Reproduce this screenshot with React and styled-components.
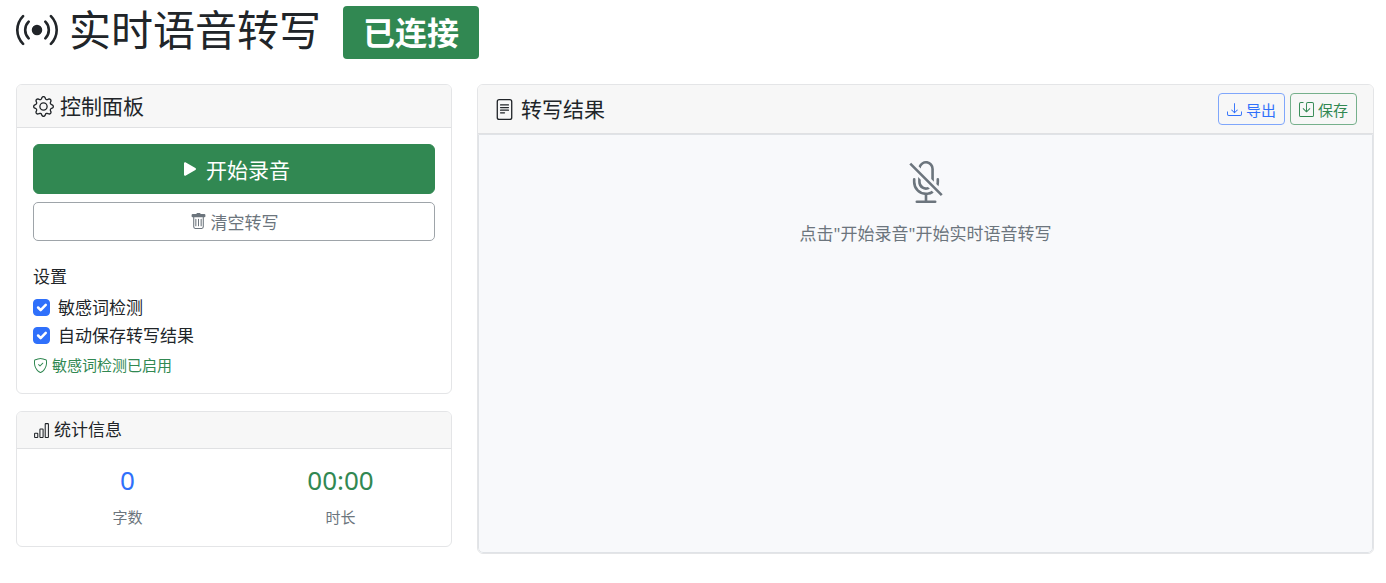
import React, { useState } from 'react'
import styled, { createGlobalStyle } from 'styled-components'
import {
  BsBarChart,
  BsBroadcast,
  BsDownload,
  BsFileText,
  BsGear,
  BsMicMute,
  BsPlayFill,
  BsSave,
  BsShieldCheck
} from 'react-icons/bs'

const GlobalStyle = createGlobalStyle`
  * {
    box-sizing: border-box;
  }
  body {
    margin: 0;
    background: #fff;
    color: #212529;
    font-family: 'Noto Sans', 'Noto Sans CJK SC', sans-serif;
    font-size: 17px;
    line-height: 25px;
  }
  h1, h2, h3, p {
    margin: 0;
    font-weight: 400;
  }
  button, input {
    font-family: inherit;
  }
`

const Page = styled.div`
  padding-left: 3px;
`

const PageHeader = styled.header`
  display: flex;
  align-items: flex-start;
  padding: 6px 12px 25px 13px;
`

const PageTitle = styled.h1`
  display: flex;
  align-items: center;
  gap: 11px;
  font-size: 42px;
  line-height: 47px;
`

const Badge = styled.span`
  margin-left: 22px;
  padding: 5px 20px;
  border-radius: 4px;
  background: #318852;
  color: #fff;
  font-size: 32px;
  font-weight: 700;
  line-height: 43px;
`

const Row = styled.main`
  display: grid;
  grid-template-columns: 1fr 2fr;
`

const Column = styled.div`
  display: flex;
  flex-direction: column;
  gap: 17px;
  padding: 0 12px 0 13px;
`

const Card = styled.section`
  display: flex;
  flex-direction: column;
  flex-grow: ${props => (props.$grow ? 1 : 0)};
  border: 1px solid #e4e5e7;
  border-radius: 6px;
  overflow: hidden;
`

const CardHeader = styled.div`
  display: flex;
  align-items: center;
  justify-content: space-between;
  padding: 8px 16px;
  border-bottom: 1px solid #e0e1e3;
  background: #f7f7f7;
`

const CardTitle = styled.h2`
  display: flex;
  align-items: center;
  gap: ${props => (props.$small ? '4px' : '6px')};
  font-size: ${props => (props.$small ? '17px' : '21px')};
  line-height: ${props => (props.$small ? '20px' : '26px')};
`

const CardBody = styled.div`
  padding: 16px 16px 17px;
`

const ButtonStack = styled.div`
  display: grid;
  gap: 8px;
  margin-bottom: 26px;
`

const Button = styled.button`
  display: flex;
  align-items: center;
  justify-content: center;
  gap: 4px;
  cursor: pointer;
`

const RecordButton = styled(Button)`
  height: 50px;
  border: 1px solid #318852;
  border-radius: 6px;
  background: #318852;
  color: #fff;
  font-size: 21px;
`

const ClearButton = styled(Button)`
  height: 39px;
  border: 1px solid #9ea4a9;
  border-radius: 5px;
  background: #fff;
  color: #6c757d;
  font-size: 17px;
`

const Tools = styled.div`
  display: flex;
  gap: 5px;
`

const ToolButton = styled(Button)`
  height: 32px;
  padding: 0 8px;
  border: 1px solid ${props => props.$border};
  border-radius: 4px;
  background: transparent;
  color: ${props => props.$color};
  font-size: 15px;
`

const SettingsTitle = styled.h3`
  margin-bottom: 8px;
  font-size: 17px;
  line-height: 20px;
`

const Check = styled.label`
  display: flex;
  align-items: center;
  gap: 8px;
  margin-bottom: 3px;
`

const CheckBoxWrap = styled.span`
  display: grid;
  place-items: center;

  > * {
    grid-area: 1 / 1;
  }
`

const Checkbox = styled.input`
  appearance: none;
  width: 17px;
  height: 17px;
  margin: 0;
  border: 1px solid ${props => (props.checked ? '#2f70fb' : '#dee2e6')};
  border-radius: 4px;
  background: ${props => (props.checked ? '#2f70fb' : '#fff')};
`

const CheckMark = styled.svg`
  pointer-events: none;
`

const Status = styled.p`
  display: flex;
  align-items: center;
  gap: 4px;
  margin-top: 6px;
  color: #318852;
  font-size: 15px;
  line-height: 22px;
`

const Stats = styled.div`
  display: grid;
  grid-template-columns: 1fr 1fr;
  padding: 15px 4px 17px;
  text-align: center;
`

const StatValue = styled.div`
  margin-bottom: 9px;
  color: ${props => props.$color};
  font-size: 26px;
  line-height: 32px;
`

const StatLabel = styled.div`
  color: #6c757d;
  font-size: 15px;
  line-height: 24px;
`

const Transcript = styled.div`
  display: flex;
  flex-direction: column;
  align-items: center;
  flex-grow: 1;
  gap: 18px;
  min-height: 419px;
  padding: 26px 17px;
  border: 1px solid #e0e3e7;
  border-radius: 0 0 5px 5px;
  background: #f8f9fb;
  color: #6c757d;
`

// trash can with a solid lid
const TrashIcon = () => (
  <svg width="1em" height="1em" viewBox="0 0 16 16" fill="currentColor">
    <path d="M5.5 5.5A.5.5 0 0 1 6 6v6a.5.5 0 0 1-1 0V6a.5.5 0 0 1 .5-.5zm2.5 0a.5.5 0 0 1 .5.5v6a.5.5 0 0 1-1 0V6a.5.5 0 0 1 .5-.5zm3 .5a.5.5 0 0 0-1 0v6a.5.5 0 0 0 1 0V6z" />
    <path
      fillRule="evenodd"
      d="M14.5 3a1 1 0 0 1-1 1H13v9a2 2 0 0 1-2 2H5a2 2 0 0 1-2-2V4h-.5a1 1 0 0 1-1-1V2a1 1 0 0 1 1-1H6a1 1 0 0 1 1-1h2a1 1 0 0 1 1 1h3.5a1 1 0 0 1 1 1v1zM4 4v9a1 1 0 0 0 1 1h6a1 1 0 0 0 1-1V4H4z"
    />
  </svg>
)

const SettingCheck = ({ id, label }) => {
  const [checked, setChecked] = useState(true)
  return (
    <Check htmlFor={id}>
      <CheckBoxWrap>
        <Checkbox
          type="checkbox"
          id={id}
          checked={checked}
          onChange={() => setChecked(!checked)}
        />
        {checked && (
          <CheckMark width="17" height="17" viewBox="0 0 20 20" fill="none">
            <path
              d="M6 10l3 3 6-6"
              stroke="#fff"
              strokeWidth="3"
              strokeLinecap="round"
              strokeLinejoin="round"
            />
          </CheckMark>
        )}
      </CheckBoxWrap>
      {label}
    </Check>
  )
}

const ControlPanel = () => (
  <Card>
    <CardHeader>
      <CardTitle><BsGear />控制面板</CardTitle>
    </CardHeader>
    <CardBody>
      <ButtonStack>
        <RecordButton type="button"><BsPlayFill size={24} />开始录音</RecordButton>
        <ClearButton type="button"><TrashIcon />清空转写</ClearButton>
      </ButtonStack>
      <SettingsTitle>设置</SettingsTitle>
      <SettingCheck id="sensitive-check" label="敏感词检测" />
      <SettingCheck id="auto-save" label="自动保存转写结果" />
      <Status><BsShieldCheck />敏感词检测已启用</Status>
    </CardBody>
  </Card>
)

const Statistics = () => (
  <Card>
    <CardHeader>
      <CardTitle $small><BsBarChart />统计信息</CardTitle>
    </CardHeader>
    <Stats>
      <div>
        <StatValue $color="#2f70fb">0</StatValue>
        <StatLabel>字数</StatLabel>
      </div>
      <div>
        <StatValue $color="#318852">00:00</StatValue>
        <StatLabel>时长</StatLabel>
      </div>
    </Stats>
  </Card>
)

const Results = () => (
  <Card $grow>
    <CardHeader>
      <CardTitle><BsFileText />转写结果</CardTitle>
      <Tools>
        <ToolButton type="button" $color="#2f70fb" $border="#7fa6fb">
          <BsDownload />导出
        </ToolButton>
        <ToolButton type="button" $color="#318852" $border="#76b08c">
          <BsSave />保存
        </ToolButton>
      </Tools>
    </CardHeader>
    <Transcript>
      <BsMicMute size={42} />
      <p>点击"开始录音"开始实时语音转写</p>
    </Transcript>
  </Card>
)

const App = () => {
  return (
    <Page lang="zh-CN">
      <GlobalStyle />
      <PageHeader>
        <PageTitle><BsBroadcast />实时语音转写</PageTitle>
        <Badge>已连接</Badge>
      </PageHeader>
      <Row>
        <Column>
          <ControlPanel />
          <Statistics />
        </Column>
        <Column>
          <Results />
        </Column>
      </Row>
    </Page>
  )
}

export default App
